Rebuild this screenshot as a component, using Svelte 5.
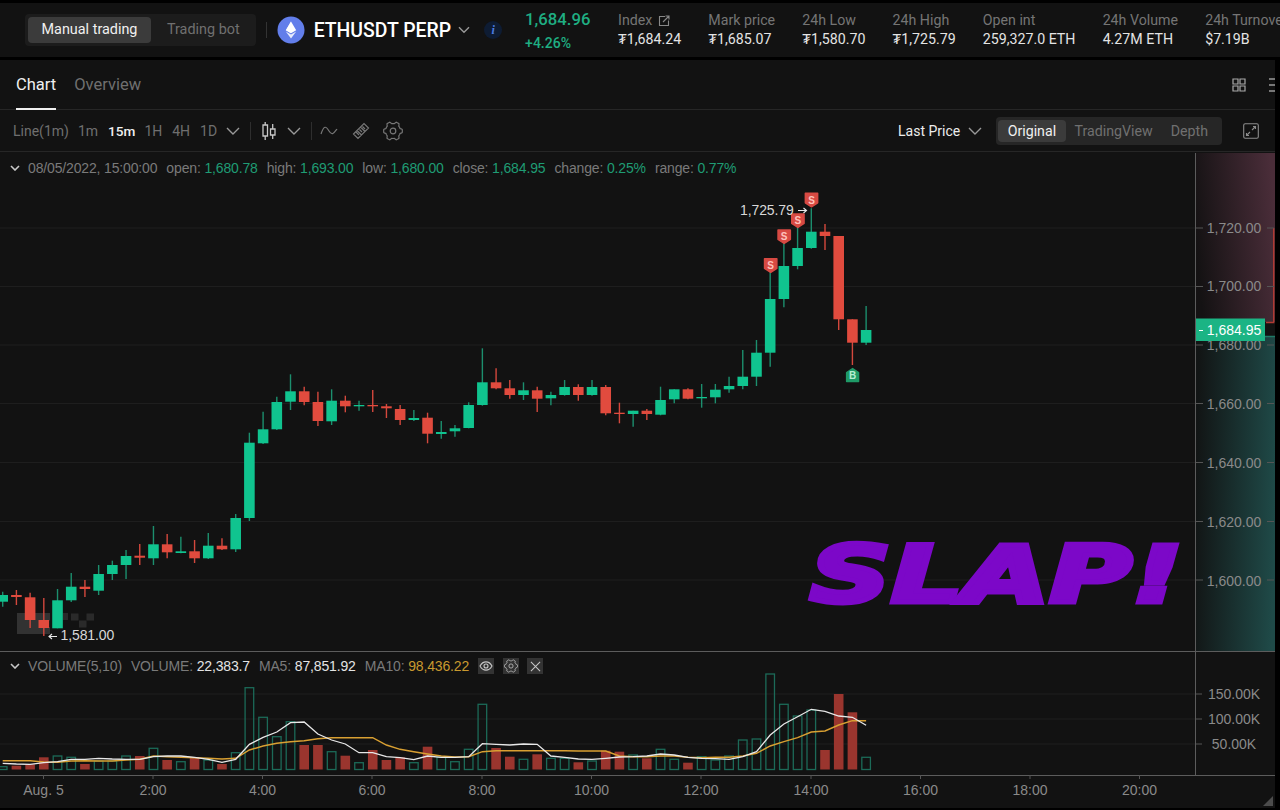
<script>
  const X = (i) => 2.7 + 13.705 * i;
  // [bodyTop, bodyBottom, wickTop, wickBottom, up]
  const candles = [
    [595,601.7,591.7,606.7,1],[595,597,590,605,0],[597.3,620,592.7,628,0],[620,628,598,636,0],[600.3,628.3,589,628.3,1],
    [586.7,600.3,573,602,1],[586.7,589,580,597,0],[574,590.7,565,595,1],[565,574,560.7,580,1],[556,565,550,579,1],
    [555.7,557.7,544,565,0],[544.3,558.3,526,565,1],[544.3,552.3,534,558.3,0],[551.3,553,536.7,553.3,1],[551.3,558.3,540,563,0],
    [545.7,558.3,533,559,1],[545.7,549.3,538.3,550,0],[518,549.3,514,552,1],[442.7,518,432.7,521,1],[429.3,443.3,411.7,444,1],
    [402,429.3,396.7,430,1],[391.3,401.7,374.3,410,1],[391.3,402,386.7,405.3,0],[402,421,391.7,426,0],[400.7,421.3,389.3,425,1],
    [400.7,406.3,395.7,412.3,0],[405,406.3,400.7,410.7,1],[405,406.3,390,412,0],[406.3,408.3,404,418,0],[409,420,405,425,0],
    [418,420,410,421,1],[417.7,433.7,412.7,443.3,0],[432,434,421,438.7,1],[428.3,431.3,425,436.7,1],[405,428,402.3,428.3,1],
    [382.3,405,348.3,405.7,1],[382.3,388.3,368.3,389.3,0],[388.3,395,380,398.7,0],[390.3,395,382.3,400,1],[390.3,398.7,386.7,412,0],
    [395,398.3,391.7,405.3,1],[387,395,380,395.7,1],[387,395,384.3,400.7,0],[387,395,380,395.7,1],[387,413.3,385,415.3,0],
    [412.7,414,402.7,423.3,0],[410.7,414,410.7,426.7,1],[410.7,414,409,420,0],[400,414.7,386.7,415.3,1],[389.3,399.3,389.3,403.3,1],
    [389.3,398.7,388.3,399.3,0],[397,398.3,384,407.7,1],[389.7,397.3,384,403.3,1],[386,389.3,376.7,392.7,1],[376.7,386,350,389.3,1],
    [352.7,376.7,340,386,1],[299,352.7,271.7,366.7,1],[266,299,243.3,307.3,1],[248,266,226.7,269.3,1],[231.7,248,208.3,248.7,1],
    [231.7,236,224,250,0],[236,319.3,236,330,0],[319.3,342.7,319.3,365,0],[330,342.7,306,345,1]
  ];
  const vols = [766.7,765.7,764.3,757.3,756,757.3,764,761,761,756,756,748.3,760,761.7,757.3,760,764,752.7,687.7,717.3,736.7,721.7,745,745,751.7,755.7,762.7,750,760,757.3,762.7,746.7,757.3,761.7,749.3,704.3,748,756.7,759.3,754.3,758.3,758.3,762.3,761,750.7,751.7,755,758.3,749.3,759.3,762.7,756.7,760,756,740,739,674,704.3,716,710,750,694,712.3,757.3];
  const ma5 = [763.3,764,764.3,762.7,761.7,759.3,759.3,758.3,759,759.3,759.3,756.7,756,756,757.3,759.3,762.3,759.3,744.3,737.3,732,722.7,722,734,740,744,752.7,752.7,756.7,757.7,759.7,756,757.3,757.3,756.7,743.7,744.3,745,744,744.3,756,757.3,759,759.3,758.3,757,756.7,756,754,755,757.3,758.3,758.7,759.3,756.7,751.7,735,724,716.7,709.3,711.3,716,717.3,725.3];
  const ma10 = [760.7,760.7,760.7,762,762.3,761,760.7,761,761,760,759.3,756,756.7,757.3,757.7,758.3,759,758.3,750,746,743.3,741.7,740.7,738.7,737.7,737.7,737.7,737.7,745,749.3,751.7,754,756,757,756.7,751.7,750.7,750.7,750.7,750.7,750.7,750.7,751,751,751,756,756.7,756.7,756,756,757.3,757.7,757.3,757.3,756,753.3,746,741.7,737.7,732,731,725,720.7,720.7];
  const line = (a) => a.map((y, i) => `${X(i).toFixed(1)},${y}`).join(' ');
  const base = 769.5;
  const grid = [228, 286.5, 345, 403.5, 462.5, 521.5, 580];
  const prices = [['1,720.00',228],['1,700.00',286],['1,680.00',345],['1,660.00',404],['1,640.00',463],['1,620.00',522],['1,600.00',581]];
  const volGrid = [['150.00K',694],['100.00K',719],['50.00K',744]];
  const times = [['Aug. 5',43.5],['2:00',153],['4:00',262.5],['6:00',372],['8:00',482],['10:00',591.5],['12:00',701],['14:00',811],['16:00',920.5],['18:00',1030],['20:00',1139.5]];
  const sells = [[770.7,265.6],[784.2,236.7],[797.9,220.7],[811.5,200]];
  const stats = [
    { l: 'Index', v: '₮1,684.24', link: true },
    { l: 'Mark price', v: '₮1,685.07' },
    { l: '24h Low', v: '₮1,580.70' },
    { l: '24h High', v: '₮1,725.79' },
    { l: 'Open int', v: '259,327.0 ETH' },
    { l: '24h Volume', v: '4.27M ETH' },
    { l: '24h Turnover', v: '$7.19B' }
  ];
  const frames = ['1m', '15m', '1H', '4H', '1D'];
  // six-lobed cog outline
  function gear(c, R) {
    const pts = [];
    for (let k = 0; k < 72; k++) {
      const t = (k / 72) * Math.PI * 2;
      const w = Math.max(-1, Math.min(1, Math.cos(6 * t + Math.PI) * 2.4));
      const r = R * (1 + 0.11 * w);
      pts.push(`${(c + r * Math.sin(t)).toFixed(2)} ${(c - r * Math.cos(t)).toFixed(2)}`);
    }
    return 'M' + pts.join(' L') + ' Z';
  }
</script>

<div class="page">
  <header class="top">
    <div class="pill mode">
      <span class="seg on">Manual trading</span>
      <span class="seg">Trading bot</span>
    </div>
    <span class="vline"></span>
    <svg class="eth" viewBox="0 0 28 28" width="28" height="28">
      <circle cx="14" cy="14" r="13.5" fill="#627eea" />
      <path d="M14 5.5 L8.8 14.2 L14 17.2 L19.2 14.2 Z" fill="#fff" />
      <path d="M14 18.5 L8.8 15.4 L14 22.6 L19.2 15.4 Z" fill="#fff" opacity=".85" />
      <path d="M14 5.5 L14 17.2 L8.8 14.2 Z" fill="#fff" opacity=".75" />
    </svg>
    <span class="sym">ETHUSDT PERP</span>
    <svg class="chev sm" viewBox="0 0 12 8" width="12" height="8"><path d="M1 1.2 L6 6.2 L11 1.2" /></svg>
    <span class="info">i</span>
    <div class="last">
      <span class="lastp">1,684.96</span>
      <span class="lastc">+4.26%</span>
    </div>
    <div class="stats">
      {#each stats as s}
        <div class="stat">
          <span class="sl">{s.l}
            {#if s.link}
              <svg viewBox="0 0 12 12" width="12" height="12" class="ext"><path d="M7 1.5 H1.5 V10.5 H10.5 V5.5 M5 7 L11 1 M7.5 1 H11 V4.5" /></svg>
            {/if}
          </span>
          <span class="sv">{s.v}</span>
        </div>
      {/each}
    </div>
  </header>

  <main class="panel">
    <nav class="tabs">
      <span class="tab on">Chart</span>
      <span class="tab">Overview</span>
      <span class="tabs-end">
        <svg viewBox="0 0 14 14" width="14" height="14" class="ico"><path d="M1 1h5v5H1zM8 1h5v5H8zM1 8h5v5H1zM8 8h5v5H8z" /></svg>
        <svg viewBox="0 0 6 14" width="6" height="14" class="ico bars"><path d="M0 1h6M0 7h6M0 13h6" /></svg>
      </span>
    </nav>
    <div class="tools">
      <span class="t-line">Line(1m)</span>
      {#each frames as f}
        <span class="tf" class:on={f === '15m'}>{f}</span>
      {/each}
      <svg class="chev" viewBox="0 0 14 8" width="14" height="8"><path d="M1 1 L7 7 L13 1" /></svg>
      <span class="vl"></span>
      <svg viewBox="0 0 16 20" width="16" height="20" class="ico candle"><path d="M2 4h4.5v11H2zM4.2 1v3M4.2 15v4M9.5 8H14v6H9.5zM11.7 3v5M11.7 14v4" /></svg>
      <svg class="chev" viewBox="0 0 14 8" width="14" height="8"><path d="M1 1 L7 7 L13 1" /></svg>
      <span class="vl"></span>
      <svg viewBox="0 0 18 10" width="18" height="10" class="ico wave dim"><path d="M1 8 C4 -1 6 0 9 5 C12 10 14 7 17 3" /></svg>
      <svg viewBox="0 0 18 18" width="18" height="18" class="ico dim"><path d="M1.5 12 L12 1.5 L16.5 6 L6 16.5 Z M5 8.5 L9.5 13 M8.5 5 L13 9.5 M7 13 L4 10 M10 10 L7.5 7.5 M13 7 L10.5 4.5" /></svg>
      <svg viewBox="0 0 20 20" width="20" height="20" class="ico dim"><path d={gear(10, 8.4)} /><circle cx="10" cy="10" r="2.8" /></svg>
      <span class="tools-end">
        <span class="lp">Last Price</span>
        <svg class="chev" viewBox="0 0 14 8" width="14" height="8"><path d="M1 1 L7 7 L13 1" /></svg>
        <div class="pill views">
          <span class="seg on">Original</span>
          <span class="seg">TradingView</span>
          <span class="seg">Depth</span>
        </div>
        <svg viewBox="0 0 16 16" width="16" height="16" class="ico full"><rect x=".7" y=".7" width="14.6" height="14.6" rx="1.5" /><path d="M9 7 L12.5 3.5 M10 3.5h2.5V6 M7 9 L3.5 12.5 M3.5 10v2.5H6" /></svg>
      </span>
    </div>

    <section class="chart">
      <svg class="canvas" viewBox="0 152 1275 656" width="1275" height="656">
        <defs>
          <linearGradient id="redg" x1="0" x2="1" y1="0.55" y2="0.35">
            <stop offset="0" stop-color="#141213" />
            <stop offset="1" stop-color="#4a2d39" />
          </linearGradient>
          <linearGradient id="greeng" x1="0" x2="1" y1="0.45" y2="0.55">
            <stop offset="0" stop-color="#121515" />
            <stop offset="1" stop-color="#1f4a48" />
          </linearGradient>
        </defs>

        <rect x="1196" y="153" width="79" height="169" fill="url(#redg)" />
        <rect x="1196" y="337" width="79" height="314" fill="url(#greeng)" />
        <path d="M1266 322.5 H1273.7 V228" fill="none" stroke="#b03a33" stroke-width="1.4" />

        {#each grid as y}
          <line x1="0" x2="1195" y1={y} y2={y} class="grid" />
        {/each}
        {#each volGrid as g}
          <line x1="0" x2="1195" y1={g[1]} y2={g[1]} class="grid" />
        {/each}

        <!-- watermark -->
        <g fill="#323232">
          <rect x="17" y="613" width="23" height="21" />
          <rect x="40" y="613" width="10" height="7.5" />
          <rect x="40" y="627" width="10" height="7" />
        </g>
        <g fill="#2a2a2a">
          <rect x="63" y="613" width="5" height="7" />
          <rect x="71" y="613.5" width="7.5" height="7" />
          <rect x="79" y="620.5" width="7.5" height="7" />
          <rect x="86.5" y="613.5" width="7.5" height="7" />
        </g>

        {#each candles as c, i}
          <g class={c[4] ? 'up' : 'down'}>
            <line x1={X(i)} x2={X(i)} y1={c[2]} y2={c[3]} />
            <rect x={X(i) - 5.3} y={c[0]} width="10.6" height={c[1] - c[0]} />
          </g>
        {/each}

        <!-- markers -->
        {#each sells as s}
          <path class="mkS" d="M{s[0] - 6.2} {s[1] - 6.8} h12.4 v9.6 l-6.2 4 l-6.2 -4 z" />
          <text class="mk" x={s[0]} y={s[1] + 3.6}>S</text>
        {/each}
        <path class="mkB" d="M852.6 368.5 l6 4 v9 h-12 v-9 z" />
        <text class="mk bk" x="852.6" y="379.3">B</text>

        <text class="note" x="740" y="214.5">1,725.79</text>
        <path d="M798 210.5 H806.5 M803.5 208 L806.5 210.5 L803.5 213" class="arrow" />
        <text class="note" x="60.5" y="640">1,581.00</text>
        <path d="M57 636.5 H49 M52 634 L49 636.5 L52 639" class="arrow" />

        <!-- volume -->
        {#each vols as top, i}
          {#if candles[i][4]}
            <rect class="vup" x={X(i) - 4.3} y={top} width="8.6" height={base - top} />
          {:else}
            <rect class="vdn" x={X(i) - 4.8} y={top} width="9.6" height={base - top} />
          {/if}
        {/each}
        <polyline class="ma10" points={line(ma10)} />
        <polyline class="ma5" points={line(ma5)} />

        <!-- axes -->
        <line x1="1195.5" x2="1195.5" y1="153" y2="775" class="axis" />
        <line x1="0" x2="1275" y1="651.5" y2="651.5" class="axis" />
        <line x1="0" x2="1275" y1="775.5" y2="775.5" class="axis" />
        {#each prices as p, k}
          <line x1="1196" x2="1203" y1={grid[k]} y2={grid[k]} class="tick" />
          <line x1="1267" x2="1274" y1={grid[k]} y2={grid[k]} class="tick" />
          <text class="ax" x="1234" y={p[1] + 5}>{p[0]}</text>
        {/each}
        {#each volGrid as g}
          <line x1="1196" x2="1202" y1={g[1]} y2={g[1]} class="tick" />
          <text class="ax" x="1234" y={g[1] + 5}>{g[0]}</text>
        {/each}
        {#each times as t}
          <line x1={t[1]} x2={t[1]} y1="775" y2="779" class="tick" />
          <text class="ax" x={t[1]} y="795">{t[0]}</text>
        {/each}

        <rect x="1196" y="318.5" width="69" height="22.5" fill="#1bb484" />
        <line x1="1199" x2="1203" y1="330.5" y2="330.5" stroke="#fff" />
        <text class="pricetag" x="1234" y="335">1,684.95</text>
        <line x1="1265" x2="1275" y1="336.5" y2="336.5" stroke="#1f7a66" stroke-width="1.5" />

        <path d="M1263 806 L1273 796 V806 Z" fill="#4c4c4c" />
      </svg>

      <div class="legend main">
        <svg class="chev lite" viewBox="0 0 10 6" width="10" height="6"><path d="M1 1 L5 5 L9 1" /></svg>
        <span>08/05/2022, 15:00:00</span>
        <span>open: <em>1,680.78</em></span>
        <span>high: <em>1,693.00</em></span>
        <span>low: <em>1,680.00</em></span>
        <span>close: <em>1,684.95</em></span>
        <span>change: <em>0.25%</em></span>
        <span>range: <em>0.77%</em></span>
      </div>

      <div class="slap">SLAP!</div>

      <div class="legend vol">
        <svg class="chev lite" viewBox="0 0 10 6" width="10" height="6"><path d="M1 1 L5 5 L9 1" /></svg>
        <span>VOLUME(5,10)</span>
        <span>VOLUME: <b>22,383.7</b></span>
        <span>MA5: <b>87,851.92</b></span>
        <span>MA10: <i>98,436.22</i></span>
        <span class="btns">
          <span class="btn"><svg viewBox="0 0 14 10" width="14" height="10"><path d="M1 5 C4 -0.5 10 -0.5 13 5 C10 10.5 4 10.5 1 5 Z" /><circle cx="7" cy="5" r="2" /></svg></span>
          <span class="btn"><svg viewBox="0 0 20 20" width="14" height="14"><path d={gear(10, 8.4)} /><circle cx="10" cy="10" r="3" /></svg></span>
          <span class="btn"><svg viewBox="0 0 12 12" width="11" height="11"><path d="M1 1 L11 11 M11 1 L1 11" /></svg></span>
        </span>
      </div>
    </section>
  </main>
</div>

<style>
  :global(body) { margin: 0; background: #000; }
  .page {
    width: 1280px; height: 810px; overflow: hidden; background: #000;
    font-family: Roboto, "Liberation Sans", sans-serif; color: #fff;
    display: flex; flex-direction: column; padding-top: 3px; box-sizing: border-box;
  }
  .top {
    height: 54px; background: #121212; display: flex; align-items: center;
    padding-left: 25px; flex: none; overflow: hidden;
  }
  .top > * { flex: none; }
  .pill {
    display: flex; align-items: center; background: #1c1c1c; border-radius: 4px;
  }
  .mode { padding: 3px; height: 26px; }
  .seg { font-size: 14px; color: #707070; white-space: nowrap; }
  .seg.on { background: #3b3b3b; color: #f0f0f0; border-radius: 4px; }
  .mode .seg { font-size: 14.4px; line-height: 26px; padding: 0 13px 0 16px; }
  .mode .seg.on { padding: 0 13.5px; }
  .vline { width: 1px; height: 16px; background: #333; margin: 0 10px; }
  .sym { font-size: 19.4px; font-weight: 500; margin-left: 9px; white-space: nowrap; }
  .chev { fill: none; stroke: #999; stroke-width: 1.4; flex: none; }
  .chev.sm { margin-left: 7px; }
  .chev.lite { stroke: #c8c8c8; stroke-width: 1.6; }
  .info {
    width: 18px; height: 18px; border-radius: 50%; background: #0e1c33; color: #4d7de0;
    font: italic bold 12px/18px "Liberation Serif", serif; text-align: center; margin-left: 14px;
  }
  .last { display: flex; flex-direction: column; margin-left: 23px; gap: 3px; width: 93px; }
  .lastp { font-size: 16.7px; font-weight: 500; color: #1fae82; line-height: 22px; }
  .lastc { font-size: 14px; font-weight: 500; color: #1fae82; line-height: 18px; }
  .stats { display: flex; gap: 27.2px; }
  .stat { display: flex; flex-direction: column; gap: 2px; white-space: nowrap; }
  .sl { font-size: 14.2px; color: #757575; line-height: 17px; display: flex; align-items: center; gap: 6px; }
  .sv { font-size: 14.2px; color: #e4e4e4; line-height: 17px; }
  .ext { fill: none; stroke: #888; stroke-width: 1.1; }

  .panel {
    margin-top: 3px; width: 1275px; height: 748px; flex: none; background: #121212;
    display: flex; flex-direction: column;
  }
  .tabs {
    height: 50px; flex: none; box-sizing: border-box; border-bottom: 1px solid #262626;
    display: flex; align-items: stretch; padding-left: 16px; gap: 18px;
  }
  .tab {
    font-size: 16.5px; color: #6f6f6f; line-height: 50px; height: 50px; box-sizing: border-box;
  }
  .tab.on { color: #efefef; border-bottom: 2px solid #efefef; }
  .tabs-end { margin-left: auto; display: flex; align-items: center; gap: 23px; width: 43px; }
  .ico { fill: none; stroke: #aaa; stroke-width: 1.2; flex: none; }
  .ico.bars { stroke: #777; stroke-width: 2; }
  .ico.dim { stroke: #777; }
  .ico.candle { stroke: #c8c8c8; stroke-width: 1.3; margin-left: 10px; }

  .tools {
    height: 42px; flex: none; box-sizing: border-box; border-bottom: 1px solid #262626;
    display: flex; align-items: center; padding-left: 13px; font-size: 14px; color: #6f6f6f;
  }
  .t-line { margin-right: 9px; }
  .tf { margin-right: 10px; }
  .tf.on { color: #f0f0f0; font-weight: 500; font-size: 13.6px; margin-right: 9px; }
  .tools > .chev { margin-left: -1px; }
  .tools > .chev + .vl { margin-left: 10px; }
  .vl { width: 1px; height: 18px; background: #2e2e2e; }
  .tools > .ico.candle + .chev { margin-left: 10px; }
  .tools > .vl + .ico.wave { margin-left: 8px; }
  .ico.wave + .ico { margin-left: 14px; }
  .ico.wave + .ico + .ico { margin-left: 13px; }
  .tools-end { margin-left: auto; display: flex; align-items: center; padding-right: 16px; }
  .lp { color: #ececec; margin-right: 8px; }
  .tools-end .chev { margin-right: 14px; }
  .views { height: 22px; padding: 3px 5px 3px 2px; margin-right: 21px; background: #262626; }
  .views .seg { font-size: 14.2px; line-height: 22px; padding: 0 9px; }
  .views .seg.on { padding: 0 9.5px; }
  .ico.full { stroke: #8c8c8c; stroke-width: 1.1; }

  .chart { position: relative; flex: 1; min-height: 0; }
  .canvas { position: absolute; left: 0; top: 0; display: block; }
  .grid { stroke: #1e1e1e; stroke-width: 1; }
  .axis { stroke: #5c5c5c; stroke-width: 1; }
  .tick { stroke: #555; stroke-width: 1; }
  .up line { stroke: #1c8f6e; stroke-width: 1.4; }
  .up rect { fill: #10c48f; }
  .down line { stroke: #d4483d; stroke-width: 1.4; }
  .down rect { fill: #e14b3e; }
  .vup { fill: none; stroke: #1c6a58; stroke-width: 1.3; }
  .vdn { fill: #9a352e; }
  .ma5 { fill: none; stroke: #e8e8e8; stroke-width: 1.3; }
  .ma10 { fill: none; stroke: #d9a032; stroke-width: 1.4; }
  text { font-family: "Liberation Sans", sans-serif; }
  .ax { font-size: 14px; fill: #8a8a8a; text-anchor: middle; }
  .pricetag { font-size: 14px; fill: #fff; text-anchor: middle; }
  .note { font-size: 14px; fill: #d8d8d8; letter-spacing: -.1px; }
  .arrow { fill: none; stroke: #e8e8e8; stroke-width: 1.1; }
  .mkS { fill: #d84a43; stroke: #d84a43; stroke-width: 1.4; stroke-linejoin: round; }
  .mkB { fill: #1f9a67; stroke: #1f9a67; stroke-width: 1.4; stroke-linejoin: round; }
  .mk { font-size: 10px; font-weight: 700; fill: #ffc2bc; text-anchor: middle; }
  .mk.bk { fill: #b5eed2; }

  .legend {
    position: absolute; left: 10px; display: flex; align-items: center; gap: 9px;
    font: 14px "Liberation Sans", sans-serif; color: #7a7a7a; white-space: nowrap; letter-spacing: -.15px;
  }
  .legend.main { top: 8px; height: 16px; }
  .legend.vol { top: 505px; height: 18px; }
  .legend em { font-style: normal; color: #1f9c74; }
  .legend b { font-weight: 400; color: #e4e4e4; }
  .legend i { font-style: normal; color: #c9992f; }
  .legend > .chev { margin-right: -1px; }
  .btns { display: flex; gap: 8.5px; margin-left: 0; }
  .btn {
    width: 16px; height: 16px; background: #333; display: flex; align-items: center; justify-content: center;
  }
  .btn svg { fill: none; stroke: #c8c8c8; stroke-width: 1.1; }

  .slap {
    position: absolute; left: 810px; top: 383px; width: 372px; height: 80px;
    font: italic 700 78px/80px "DejaVu Sans", sans-serif; color: #7c08c8;
    -webkit-text-stroke: 5px #7c08c8; transform-origin: 0 0;
    transform: scaleX(1.44); white-space: nowrap;
  }
</style>
